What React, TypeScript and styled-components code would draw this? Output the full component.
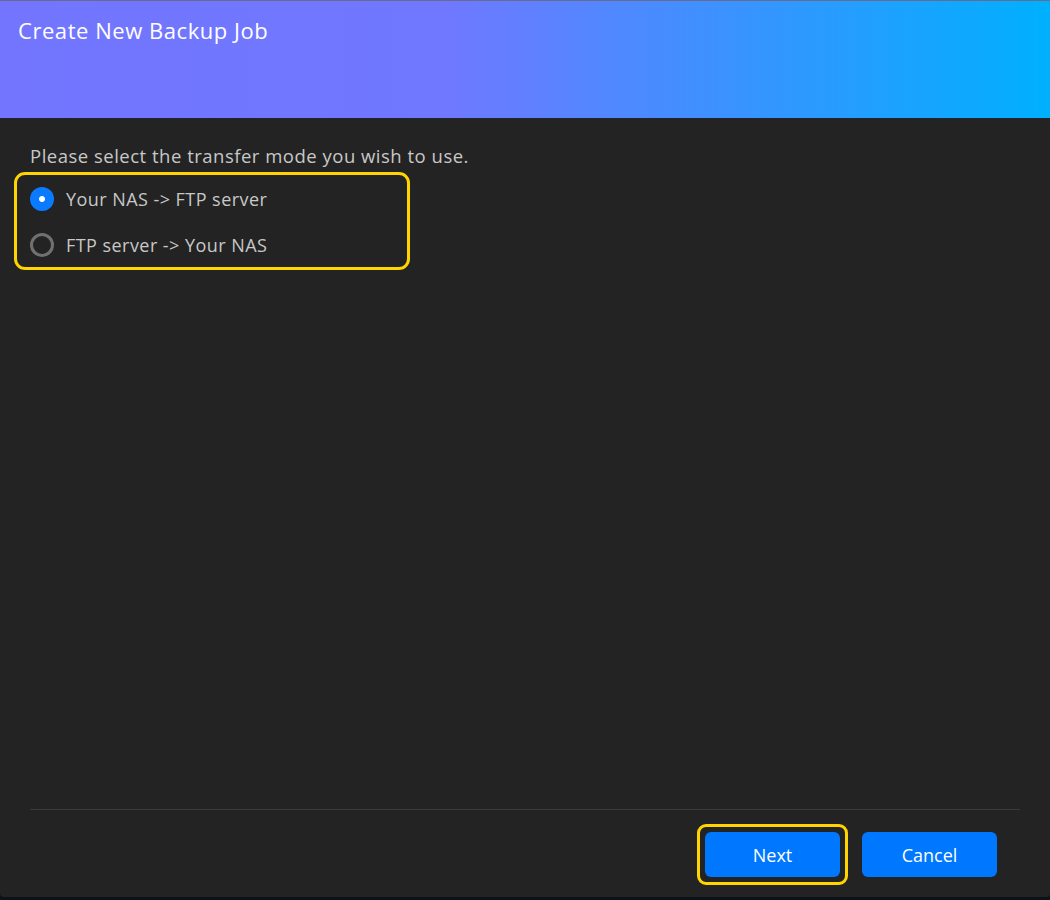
import styled, { createGlobalStyle } from "styled-components";

const GlobalStyle = createGlobalStyle`
  html, body {
    margin: 0;
    padding: 0;
    background: #0d1216;
  }
  body {
    font-family: "Open Sans", "Noto Sans", sans-serif;
  }
`;

type Option = {
  id: string;
  label: string;
};

const options: Option[] = [
  { id: "nas-to-ftp", label: "Your NAS -> FTP server" },
  { id: "ftp-to-nas", label: "FTP server -> Your NAS" },
];

export default function App() {
  const selected = "nas-to-ftp";

  return (
    <>
      <GlobalStyle />
      <Dialog>
        <Header>
          <Title>Create New Backup Job</Title>
        </Header>
        <Body>
          <Prompt>Please select the transfer mode you wish to use.</Prompt>
          <Highlight>
            {options.map((opt) => (
              <RadioRow key={opt.id}>
                <Radio $checked={opt.id === selected} />
                <RadioLabel>{opt.label}</RadioLabel>
              </RadioRow>
            ))}
          </Highlight>
        </Body>
        <Footer>
          <Divider />
          <Actions>
            <FocusRing>
              <Button>Next</Button>
            </FocusRing>
            <Button>Cancel</Button>
          </Actions>
        </Footer>
      </Dialog>
    </>
  );
}

const Dialog = styled.div`
  width: 1050px;
  height: 897px;
  display: flex;
  flex-direction: column;
  background: #232323;
  box-sizing: border-box;
  border-radius: 0 0 4px 4px;
  overflow: hidden;
`;

const Header = styled.header`
  height: 118px;
  flex-shrink: 0;
  padding: 14px 18px 0;
  box-sizing: border-box;
  background: linear-gradient(90deg, #7375ff 0%, #7078ff 42%, #00b0ff 100%);
  border-top: 1px solid #6a6a8a;
`;

const Title = styled.h1`
  margin: 0;
  font-size: 22px;
  font-weight: 400;
  color: #ffffff;
  line-height: 30px;
  letter-spacing: 0.55px;
`;

const Body = styled.main`
  flex: 1;
  padding: 25px 14px 0;
  display: flex;
  flex-direction: column;
  align-items: flex-start;
`;

const Prompt = styled.p`
  margin: 0 0 3px 16px;
  font-size: 18.5px;
  letter-spacing: 0.5px;
  color: #c8c8c8;
  line-height: 26px;
`;

const Highlight = styled.div`
  width: 396px;
  height: 98px;
  box-sizing: border-box;
  border: 3px solid #ffd400;
  border-radius: 11px;
  padding: 12px 0 0 13px;
  display: flex;
  flex-direction: column;
  gap: 22px;
`;

const RadioRow = styled.label`
  display: flex;
  align-items: center;
  gap: 12px;
  height: 24px;
`;

const Radio = styled.span<{ $checked: boolean }>`
  width: 24px;
  height: 24px;
  box-sizing: border-box;
  border-radius: 50%;
  flex-shrink: 0;
  background: ${({ $checked }) =>
    $checked
      ? "radial-gradient(circle, #ffffff 0 2.5px, #0a7bff 3.5px)"
      : "transparent"};
  border: ${({ $checked }) => ($checked ? "none" : "3px solid #707070")};
`;

const RadioLabel = styled.span`
  font-size: 18px;
  letter-spacing: 0.45px;
  color: #c8c8c8;
  line-height: 24px;
`;

const Footer = styled.footer`
  flex-shrink: 0;
  padding: 0 30px 12px;
  display: flex;
  flex-direction: column;
`;

const Divider = styled.hr`
  margin: 0;
  border: none;
  border-top: 1px solid #3a3a3a;
`;

const Actions = styled.div`
  display: flex;
  justify-content: flex-end;
  align-items: center;
  gap: 14px;
  padding: 14px 23px 0 0;
`;

const FocusRing = styled.div`
  padding: 5px;
  border: 3px solid #ffd400;
  border-radius: 9px;
  display: flex;
`;

const Button = styled.button`
  width: 135px;
  height: 45px;
  border: none;
  border-radius: 6px;
  background: #0077ff;
  color: #ffffff;
  font-family: "Open Sans", "Noto Sans", sans-serif;
  font-size: 18px;
  cursor: pointer;
`;
